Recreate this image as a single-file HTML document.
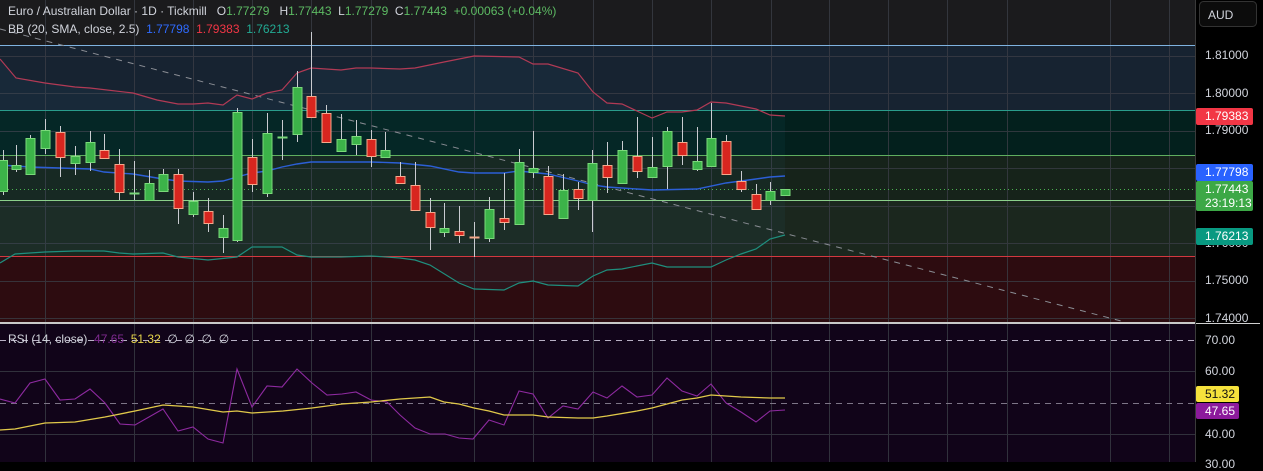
<!DOCTYPE html>
<html><head><meta charset="utf-8"><style>
html,body{margin:0;padding:0;background:#000;}
body{width:1263px;height:462px;overflow:hidden;position:relative;font-family:"Liberation Sans",sans-serif;}
.t{position:absolute;font-size:12px;white-space:nowrap;color:#d1d4dc;}
.ax{position:absolute;left:1205px;font-size:12px;color:#d1d4dc;}
.lb{position:absolute;left:1196px;width:57px;font-size:12px;color:#fff;border-radius:2px;padding-left:9px;box-sizing:border-box;}
</style></head><body>
<svg width="1263" height="462" style="position:absolute;left:0;top:0" xmlns="http://www.w3.org/2000/svg">
<rect x="0" y="0" width="1196" height="323" fill="#1b1b1d"/>
<rect x="0" y="45" width="1196" height="65" fill="#172331"/>
<rect x="0" y="110" width="1196" height="45" fill="#03201d"/>
<rect x="0" y="155" width="1196" height="45" fill="#16231a"/>
<rect x="0" y="200" width="1196" height="56" fill="#1b271e"/>
<rect x="0" y="256" width="1196" height="67" fill="#2d0c10"/>
<rect x="0" y="324" width="1196" height="138" fill="#110419"/>
<g stroke="#3a3d45" stroke-width="1" opacity="0.8">
<path d="M45.5 0V462M134.5 0V462M193.5 0V462M252.5 0V462M311.5 0V462M371.5 0V462M474.5 0V462M533.5 0V462M593.5 0V462M652.5 0V462M711.5 0V462M771.5 0V462M829.5 0V462M888.5 0V462M947.5 0V462M1007.5 0V462M1110.5 0V462M1169.5 0V462"/>
<path d="M0 56.5H1196M0 93.5H1196M0 131.5H1196M0 168.5H1196M0 206.5H1196M0 243.5H1196M0 281.5H1196M0 318.5H1196M0 371.5H1196M0 434.5H1196"/>
</g>
<path d="M0 59 L16 78 L45 83 L75 87 L90 88 L133 93 L157 100 L178 104 L208 103 L223 105 L237 95 L252 99 L267 93 L282 90 L297 73 L311 68 L341 70 L371 68 L400 69 L415 68 L444 62 L474 56 L519 57 L533 64 L548 64 L578 73 L593 92 L607 103 L622 104 L637 111 L652 118 L667 112 L697 110 L711 102 L726 103 L756 109 L770 115 L785 116 L785 235 L770 239 L756 249 L741 254 L726 260 L711 267 L667 267 L652 263 L622 269 L607 270 L593 276 L578 286 L548 285 L533 281 L519 283 L504 290 L474 289 L459 283 L430 265 L415 260 L400 258 L371 256 L311 257 L297 255 L282 247 L252 247 L237 257 L208 260 L178 257 L163 253 L133 254 L104 251 L45 252 L15 254 L0 263Z" fill="#3aa0c0" opacity="0.06"/>
<g stroke-width="1">
<line x1="0" y1="45.5" x2="1196" y2="45.5" stroke="#7fb3e0"/>
<line x1="0" y1="110.5" x2="1196" y2="110.5" stroke="#2a9d8c"/>
<line x1="0" y1="155.5" x2="1196" y2="155.5" stroke="#5fae5f"/>
<line x1="0" y1="200.5" x2="1196" y2="200.5" stroke="#8bd08b"/>
<line x1="0" y1="256.5" x2="1196" y2="256.5" stroke="#d2383f"/>
<line x1="0" y1="189.5" x2="1196" y2="189.5" stroke="#4caf50" stroke-dasharray="1 3"/>
<line x1="0" y1="29" x2="1125" y2="322" stroke="#8a8d94" stroke-dasharray="6 6"/>
</g>
<polyline fill="none" stroke="#b23a55" stroke-width="1.2" points="0,59 16,78 45,83 75,87 90,88 133,93 157,100 178,104 193,104 208,103 223,105 237,95 252,99 267,93 282,90 297,73 311,68 341,70 356,68 371,68 400,69 415,68 444,62 474,56 519,57 533,64 548,64 578,73 593,92 607,103 622,104 637,111 652,118 667,112 682,112 697,110 711,102 726,103 756,109 770,115 785,116"/>
<polyline fill="none" stroke="#2c5fd6" stroke-width="1.4" points="0,165 30,167 60,168 90,169 104,172 133,174 163,179 178,181 208,182 223,181 237,177 252,173 267,171 282,167 297,164 311,162 371,162 400,163 430,166 459,172 474,173 504,173 519,171 548,174 578,181 593,185 607,187 652,190 697,189 726,183 756,179 770,177 785,176"/>
<polyline fill="none" stroke="#1f8f7e" stroke-width="1.2" points="0,263 15,254 45,252 75,251 104,251 119,253 133,254 163,253 178,257 208,260 237,257 252,247 282,247 297,255 311,257 341,257 371,256 400,258 415,260 430,265 459,283 474,289 504,290 519,283 533,281 548,285 578,286 593,276 607,270 622,269 652,263 667,267 697,267 711,267 726,260 741,254 756,249 770,239 785,235"/>
<g stroke="#c9cbd0" stroke-width="1">
<path d="M3.5 150V195M16.5 145V172M30.5 135V175M45.5 119V154M60.5 126V177M75.5 146V175M90.5 131V171M104.5 134V158M119.5 149V200M134.5 161V200M149.5 170V200M163.5 169V191M178.5 169V224M193.5 192V217M208.5 198V232M223.5 215V253M237.5 108V242M252.5 139V192M267.5 113V197M282.5 120V160M297.5 71V142M311.5 32V117M326.5 105V143M341.5 114V151M356.5 120V155M371.5 130V167M385.5 132V157M400.5 162V183M415.5 162V210M430.5 198V250M444.5 203V237M459.5 206V243M474.5 222V257M489.5 197V242M504.5 173V230M519.5 149V224M533.5 131V178M548.5 166V214M563.5 174V218M578.5 182V210M592.5 150V232M607.5 142V193M622.5 141V183M637.5 117V178M652.5 137V177M667.5 127V189M682.5 117V165M697.5 127V171M711.5 103V166M726.5 135V175M741.5 171V192M756.5 184V209M770.5 182V205"/>
</g>
<g fill="#3cb349" stroke="#7ad97a" stroke-width="1">
<rect x="-1.5" y="160.5" width="9" height="31"/>
<rect x="12" y="165.5" width="9" height="4"/>
<rect x="26" y="138.5" width="9" height="36"/>
<rect x="41" y="130.5" width="9" height="18"/>
<rect x="71" y="156.5" width="9" height="7"/>
<rect x="86" y="142.5" width="9" height="20"/>
<rect x="130" y="193" width="9" height="1"/>
<rect x="145" y="183.5" width="9" height="17"/>
<rect x="159" y="174.5" width="9" height="17"/>
<rect x="189" y="201.5" width="9" height="13"/>
<rect x="219" y="228.5" width="9" height="9"/>
<rect x="233" y="112.5" width="9" height="128"/>
<rect x="263" y="133.5" width="9" height="60"/>
<rect x="278" y="137" width="9" height="1"/>
<rect x="293" y="87.5" width="9" height="47"/>
<rect x="337" y="139.5" width="9" height="12"/>
<rect x="352" y="136.5" width="9" height="8"/>
<rect x="381" y="150.5" width="9" height="7"/>
<rect x="440" y="228.5" width="9" height="4"/>
<rect x="485" y="209.5" width="9" height="29"/>
<rect x="515" y="162.5" width="9" height="62"/>
<rect x="529" y="168.5" width="9" height="4"/>
<rect x="559" y="190.5" width="9" height="28"/>
<rect x="588" y="163.5" width="9" height="37"/>
<rect x="618" y="150.5" width="9" height="33"/>
<rect x="648" y="167.5" width="9" height="10"/>
<rect x="663" y="131.5" width="9" height="35"/>
<rect x="693" y="161.5" width="9" height="8"/>
<rect x="707" y="138.5" width="9" height="28"/>
<rect x="766" y="191.5" width="9" height="9"/>
<rect x="781" y="189.5" width="9" height="6"/>
</g>
<g fill="#d8261f" stroke="#f5a98c" stroke-width="1">
<rect x="56" y="132.5" width="9" height="25"/>
<rect x="100" y="150.5" width="9" height="8"/>
<rect x="115" y="164.5" width="9" height="28"/>
<rect x="174" y="174.5" width="9" height="34"/>
<rect x="204" y="211.5" width="9" height="12"/>
<rect x="248" y="157.5" width="9" height="27"/>
<rect x="307" y="96.5" width="9" height="21"/>
<rect x="322" y="113.5" width="9" height="29"/>
<rect x="367" y="139.5" width="9" height="17"/>
<rect x="396" y="176.5" width="9" height="7"/>
<rect x="411" y="185.5" width="9" height="25"/>
<rect x="426" y="212.5" width="9" height="15"/>
<rect x="455" y="231.5" width="9" height="4"/>
<rect x="470" y="237" width="9" height="1"/>
<rect x="500" y="218.5" width="9" height="4"/>
<rect x="544" y="176.5" width="9" height="38"/>
<rect x="574" y="189.5" width="9" height="9"/>
<rect x="603" y="165.5" width="9" height="12"/>
<rect x="633" y="156.5" width="9" height="15"/>
<rect x="678" y="142.5" width="9" height="13"/>
<rect x="722" y="141.5" width="9" height="33"/>
<rect x="737" y="181.5" width="9" height="8"/>
<rect x="752" y="194.5" width="9" height="15"/>
</g>
<rect x="0" y="322" width="1196" height="2" fill="#c9c9c9"/>
<line x1="0" y1="340.5" x2="1196" y2="340.5" stroke="#b8b0c4" stroke-dasharray="6 5"/>
<line x1="0" y1="403.5" x2="1196" y2="403.5" stroke="#7d7587" stroke-dasharray="6 5"/>
<polyline fill="none" stroke="#8e2aa0" stroke-width="1.1" points="0,399 15,403 30,383 45,379 60,400 75,399 90,389 105,403 120,424 135,425 163,409 178,431 193,427 208,439 223,443 237,369 252,407 267,386 282,387 297,369 312,383 327,395 342,394 356,392 371,400 387,402 400,415 415,428 430,434 445,434 459,438 473,439 489,420 504,425 519,391 533,394 548,418 563,406 578,409 593,392 607,398 622,386 637,397 652,395 667,378 682,391 697,396 711,384 726,403 741,412 756,422 770,411 785,410"/>
<polyline fill="none" stroke="#e1c94a" stroke-width="1.3" points="0,430 15,429 45,423 75,422 105,417 135,411 163,405 193,407 223,412 237,411 252,413 283,411 312,408 342,404 371,402 400,399 430,397 444,402 459,404 474,408 489,411 504,415 533,415 548,417 578,418 593,418 607,416 637,411 652,408 667,404 682,400 697,398 711,395 726,396 741,397 770,398 785,398"/>
<line x1="1195.5" y1="0" x2="1195.5" y2="462" stroke="#3a3a3a"/>
<line x1="1196" y1="323.5" x2="1260" y2="323.5" stroke="#d0d0d0"/>
<rect x="1199.5" y="1.5" width="57" height="25" rx="4" fill="#0c0c0c" stroke="#333"/>
</svg>
<div class="t" style="left:8px;top:4px;">Euro / Australian Dollar · 1D · Tickmill &nbsp;&nbsp;O<span style="color:#5dbb63">1.77279</span> &nbsp;&nbsp;H<span style="color:#5dbb63">1.77443</span> &nbsp;L<span style="color:#5dbb63">1.77279</span> &nbsp;C<span style="color:#5dbb63">1.77443</span> &nbsp;<span style="color:#5dbb63">+0.00063 (+0.04%)</span></div>
<div class="t" style="left:8px;top:22px;">BB (20, SMA, close, 2.5) &nbsp;<span style="color:#2f6bff">1.77798</span> &nbsp;<span style="color:#f23645">1.79383</span> &nbsp;<span style="color:#22ab94">1.76213</span></div>
<div class="t" style="left:8px;top:332px;">RSI (14, close) &nbsp;<span style="color:#7e2a8f">47.65</span> &nbsp;<span style="color:#e6d44a">51.32</span> &nbsp;∅ &nbsp;∅ &nbsp;∅ &nbsp;∅</div>
<div class="t" style="left:1208px;top:8px;">AUD</div>
<div class="ax" style="top:48px">1.81000</div>
<div class="ax" style="top:86px">1.80000</div>
<div class="ax" style="top:123px">1.79000</div>
<div class="ax" style="top:273px">1.75000</div>
<div class="ax" style="top:311px">1.74000</div>
<div class="ax" style="top:236px">1.76000</div>
<div class="lb" style="top:108px;height:17px;line-height:17px;background:#f23645">1.79383</div>
<div class="lb" style="top:164px;height:17px;line-height:17px;background:#2962ff">1.77798</div>
<div class="lb" style="top:181px;height:30px;line-height:14px;padding-top:1px;background:#3ca846">1.77443<br>23:19:13</div>
<div class="lb" style="top:228px;height:17px;line-height:17px;background:#089981">1.76213</div>
<div class="ax" style="top:333px">70.00</div>
<div class="ax" style="top:364px">60.00</div>
<div class="ax" style="top:427px">40.00</div>
<div class="ax" style="top:457px">30.00</div>
<div class="lb" style="top:386px;width:43px;height:16px;line-height:16px;background:#f5e23c;color:#111">51.32</div>
<div class="lb" style="top:403px;width:43px;height:16px;line-height:16px;background:#8c1a9c">47.65</div>
</body></html>
